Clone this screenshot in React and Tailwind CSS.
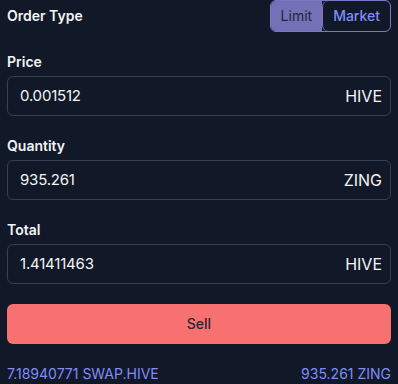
import { useState } from 'react';

export default function App() {
  const [orderType, setOrderType] = useState('limit');

  const fields = [
    { label: 'Price', value: '0.001512', unit: 'HIVE' },
    { label: 'Quantity', value: '935.261', unit: 'ZING' },
    { label: 'Total', value: '1.41411463', unit: 'HIVE' }
  ];

  return (
    <div
      className="min-h-screen bg-[#111827] text-white px-[7px] flex flex-col gap-5"
      style={{ fontFamily: 'Inter, "Liberation Sans", sans-serif' }}
    >
      {/* Order type toggle */}
      <div className="flex items-center justify-between h-8">
        <span className="text-sm font-semibold text-gray-100">Order Type</span>
        <div className="flex h-8 rounded-md overflow-hidden border border-[#7a78c4]">
          <button
            onClick={() => setOrderType('limit')}
            className={`px-2.5 text-sm ${orderType === 'limit' ? 'bg-[#7471b8] text-[#1f2937]' : 'text-[#818cf8]'}`}
          >
            Limit
          </button>
          <button
            onClick={() => setOrderType('market')}
            className={`px-2.5 text-sm font-medium border-l border-[#7a78c4] rounded-md ${orderType === 'market' ? 'bg-[#7471b8] text-[#1f2937]' : 'text-[#818cf8]'}`}
          >
            Market
          </button>
        </div>
      </div>

      {fields.map(f => (
        <div key={f.label}>
          <div className="text-sm font-semibold text-gray-100 mb-1">{f.label}</div>
          <div className="flex items-center justify-between h-10 px-3 border border-[#374151] rounded-md">
            <span className="text-[15px] text-gray-100 tracking-[-0.2px]">{f.value}</span>
            <span className="text-base text-gray-100 -mr-1">{f.unit}</span>
          </div>
        </div>
      ))}

      <button className="h-10 w-full rounded-md bg-[#f87171] text-sm text-[#1f2937] font-medium">
        Sell
      </button>

      <div className="flex justify-between text-sm text-[#818cf8] leading-5">
        <span>7.18940771 SWAP.HIVE</span>
        <span>935.261 ZING</span>
      </div>
    </div>
  );
}
